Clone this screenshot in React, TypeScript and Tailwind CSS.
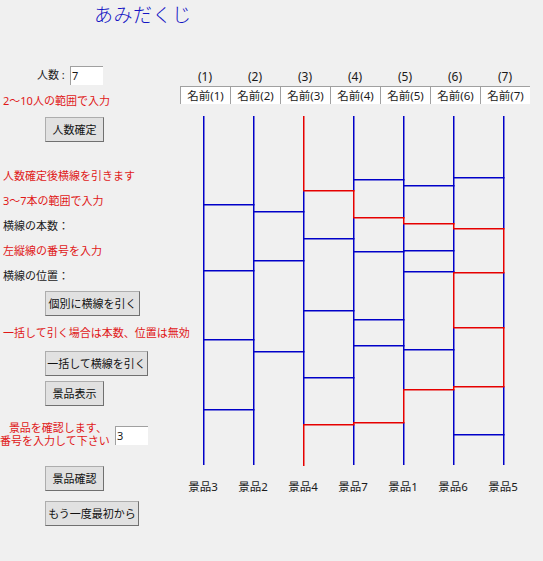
import React from "react";

const BLUE = "#0000c8";
const RED = "#e60000";

const X0 = 23; // first vertical line x within svg
const TOP = 104; // svg top in page coords
const LINE_TOP = 116;
const LINE_BOTTOM = 465;
const LW = 1.5;

type H = { pair: number; y: number; red?: boolean };

const rungs: H[] = [
  { pair: 0, y: 204 }, { pair: 0, y: 270 }, { pair: 0, y: 339 }, { pair: 0, y: 409 },
  { pair: 1, y: 211 }, { pair: 1, y: 260 }, { pair: 1, y: 351 },
  { pair: 2, y: 190, red: true }, { pair: 2, y: 238 }, { pair: 2, y: 310 }, { pair: 2, y: 377 }, { pair: 2, y: 424, red: true },
  { pair: 3, y: 179 }, { pair: 3, y: 217, red: true }, { pair: 3, y: 251 }, { pair: 3, y: 319 }, { pair: 3, y: 345 }, { pair: 3, y: 422, red: true },
  { pair: 4, y: 185 }, { pair: 4, y: 223, red: true }, { pair: 4, y: 250 }, { pair: 4, y: 271 }, { pair: 4, y: 349 }, { pair: 4, y: 389, red: true },
  { pair: 5, y: 177 }, { pair: 5, y: 228, red: true }, { pair: 5, y: 272, red: true }, { pair: 5, y: 327, red: true }, { pair: 5, y: 386, red: true }, { pair: 5, y: 434 },
];

const redSegs: [number, number, number][] = [
  [2, 116, 190], [2, 424, 465],
  [3, 190, 217], [3, 422, 424],
  [4, 217, 223], [4, 389, 422],
  [5, 223, 228], [5, 272, 327], [5, 386, 389],
  [6, 228, 272], [6, 327, 386],
];

// split each vertical line into blue / red pieces so colours never overlap
function verticalPieces() {
  const out: { i: number; a: number; b: number; red: boolean }[] = [];
  for (let i = 0; i < 7; i++) {
    const reds = redSegs.filter((s) => s[0] === i).sort((p, q) => p[1] - q[1]);
    let cur = LINE_TOP;
    for (const [, a, b] of reds) {
      if (a > cur) out.push({ i, a: cur, b: a, red: false });
      out.push({ i, a, b: b + 1, red: true });
      cur = b + 1;
    }
    if (cur < LINE_BOTTOM) out.push({ i, a: cur, b: LINE_BOTTOM, red: false });
  }
  return out;
}

const vx = (i: number) => X0 + i * 50;
const vy = (y: number) => y - TOP;

function Ladder() {
  const pieces = verticalPieces();
  return (
    <svg width={350} height={370} className="block">
      {pieces.map((p, k) => (
        <rect key={"v" + k} x={vx(p.i)} y={vy(p.a)} width={LW} height={p.b - p.a} fill={p.red ? RED : BLUE} />
      ))}
      {rungs.map((r, k) => (
        <rect key={"h" + k} x={vx(r.pair)} y={vy(r.y)} width={50 + LW} height={LW} fill={r.red ? RED : BLUE} />
      ))}
    </svg>
  );
}

function Btn({ children, w }: { children: React.ReactNode; w: string }) {
  return (
    <button
      className={`ml-[45px] h-[25px] ${w} flex items-center justify-center border border-[#adadad] border-r-[#707070] border-b-[#707070] bg-[#e1e1e1] text-[11px] text-[#111] leading-none`}
    >
      {children}
    </button>
  );
}

const prizes = ["景品3", "景品2", "景品4", "景品7", "景品1", "景品6", "景品5"];

export default function App() {
  return (
    <div
      className="w-[543px] h-[561px] bg-[#f0f0f0] flex text-[11px] text-[#1a1a1a] overflow-hidden"
      style={{ fontFamily: '"Noto Sans", "Noto Sans CJK JP", sans-serif' }}
    >
      {/* left column */}
      <div className="w-[180px] flex flex-col shrink-0">
        <div className="h-[30px] pl-[94px] text-[19px] leading-[30px] text-[#1414c4] font-light tracking-[0.5px] whitespace-nowrap">
          あみだくじ
        </div>
        <div className="mt-[36px] h-[19px] flex items-center">
          <span className="ml-[37px] w-[33px] whitespace-nowrap">人数 :</span>
          <div className="w-[33px] h-[19px] bg-white border-t border-l border-[#a0a0a0] text-[11px] leading-[18px] pl-[1px]">7</div>
        </div>
        <div className="mt-[8px] h-[16px] leading-[16px] pl-[3px] text-[#e01818] whitespace-nowrap">2〜10人の範囲で入力</div>
        <div className="mt-[8px]">
          <Btn w="w-[59px]">人数確定</Btn>
        </div>
        <div className="mt-[26px] h-[16px] leading-[16px] pl-[3px] text-[#e01818] whitespace-nowrap">人数確定後横線を引きます</div>
        <div className="mt-[9px] h-[16px] leading-[16px] pl-[3px] text-[#e01818] whitespace-nowrap">3〜7本の範囲で入力</div>
        <div className="mt-[9px] h-[16px] leading-[16px] pl-[3px] whitespace-nowrap">横線の本数：</div>
        <div className="mt-[9px] h-[16px] leading-[16px] pl-[3px] text-[#e01818] whitespace-nowrap">左縦線の番号を入力</div>
        <div className="mt-[9px] h-[16px] leading-[16px] pl-[3px] whitespace-nowrap">横線の位置：</div>
        <div className="mt-[7px]">
          <Btn w="w-[95px]">個別に横線を引く</Btn>
        </div>
        <div className="mt-[9px] h-[16px] leading-[16px] pl-[3px] text-[#e01818] whitespace-nowrap">一括して引く場合は本数、位置は無効</div>
        <div className="mt-[10px]">
          <Btn w="w-[103px]">一括して横線を引く</Btn>
        </div>
        <div className="mt-[5px]">
          <Btn w="w-[59px]">景品表示</Btn>
        </div>
        <div className="mt-[15px] h-[27px] flex">
          <div className="w-[107px] text-right leading-[13px] text-[#e01818] whitespace-nowrap">
            <div>景品を確認します、</div>
            <div>番号を入力して下さい</div>
          </div>
          <div className="ml-[8px] mt-[5px] w-[33px] h-[19px] bg-white border-t border-l border-[#a0a0a0] text-[11px] leading-[18px] pl-[1px]">3</div>
        </div>
        <div className="mt-[18px]">
          <Btn w="w-[59px]">景品確認</Btn>
        </div>
        <div className="mt-[10px]">
          <Btn w="w-[94px]">もう一度最初から</Btn>
        </div>
      </div>

      {/* right column */}
      <div className="flex flex-col pt-[69px]">
        <div className="flex h-[16px]">
          {[1, 2, 3, 4, 5, 6, 7].map((n) => (
            <div key={n} className="w-[50px] text-center leading-[16px] text-[12px]">({n})</div>
          ))}
        </div>
        <div className="mt-[1px] flex h-[18px]">
          {[1, 2, 3, 4, 5, 6, 7].map((n) => (
            <div key={n} className="w-[50px] bg-white border-t border-l border-[#a0a0a0] text-center leading-[17px] text-[11.5px]">
              名前({n})
            </div>
          ))}
        </div>
        <Ladder />
        <div className="mt-[5px] -ml-[2px] flex h-[16px]">
          {prizes.map((p) => (
            <div key={p} className="w-[50px] text-center leading-[16px] text-[11.5px]">{p}</div>
          ))}
        </div>
      </div>
    </div>
  );
}
